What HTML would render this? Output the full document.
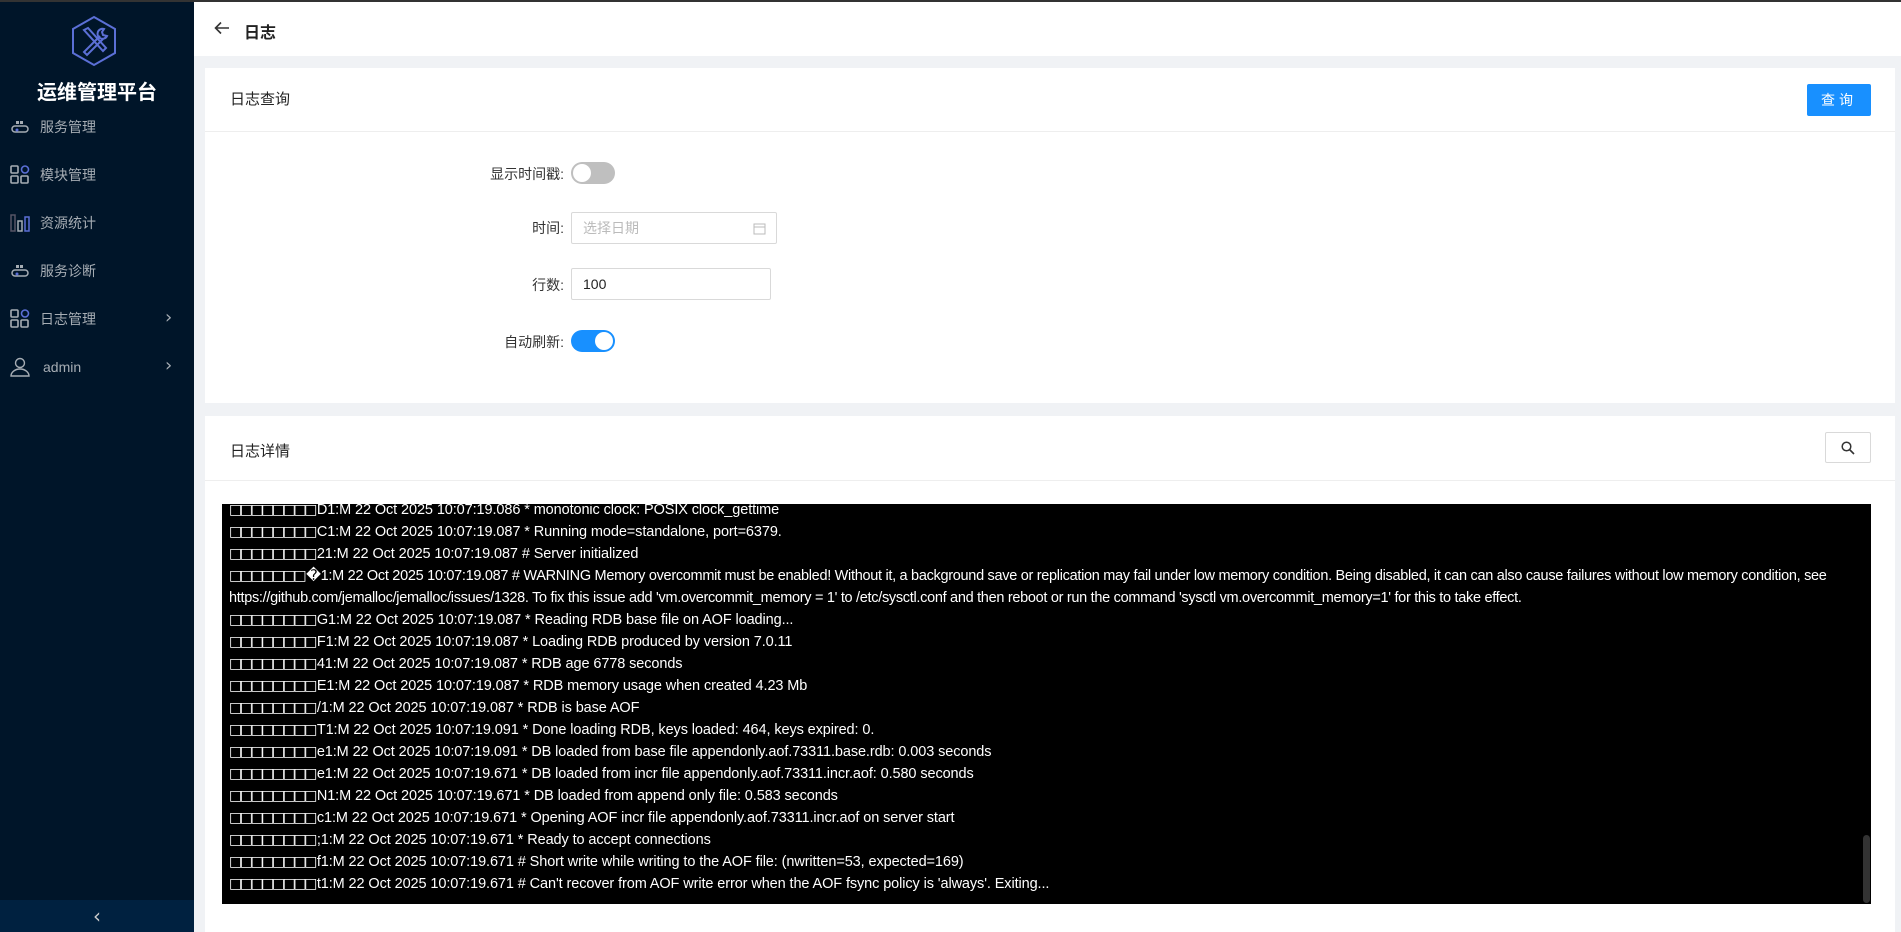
<!DOCTYPE html>
<html><head><meta charset="utf-8"><style>
*{margin:0;padding:0;box-sizing:border-box}
body{width:1901px;height:932px;overflow:hidden;background:#f0f2f5;font-family:"Liberation Sans","Noto Sans CJK SC",sans-serif;position:relative}
.abs{position:absolute}
#topline{left:0;top:0;width:1901px;height:2px;background:#333}
#side{left:0;top:2px;width:194px;height:930px;background:#001529}
.mi{position:absolute;left:0;width:194px;height:24px;color:#a6adb4;font-size:14px;line-height:24px}
.mi .t{position:absolute;left:40px;top:0}
.mi .ic{position:absolute;left:10px;top:2px}
.mi .ch{position:absolute;left:165px;top:-1px;color:#a6adb4;font-size:18px;font-family:"DejaVu Sans",sans-serif}
#hdr{left:194px;top:2px;width:1707px;height:54px;background:#fff}
.card{background:#fff;position:absolute;left:205px;width:1690px}
.ct{position:absolute;left:25px;font-size:15px;color:#222}
.lbl{position:absolute;font-size:14px;color:#333;text-align:right;width:200px;left:364px}
.sw{position:absolute;left:571px;width:44px;height:22px;border-radius:11px}
.sw i{position:absolute;top:2px;width:18px;height:18px;border-radius:50%;background:#fff}
.inp{position:absolute;left:571px;border:1px solid #d9d9d9;border-radius:2px;font-size:13px;padding-left:11px}
#log{left:222px;top:504px;width:1649px;height:400px;background:#000;color:#fff;font-size:14.5px;line-height:22px;padding:0 0 0 7px;overflow:hidden;white-space:nowrap;font-family:"Liberation Sans","DejaVu Sans",sans-serif;letter-spacing:-0.1px}
.b{font-family:"DejaVu Sans",sans-serif;font-size:14px;letter-spacing:-2.5px;margin-right:2px}
.n{letter-spacing:-0.3px}
</style></head><body>
<div id="topline" class="abs"></div>
<div id="side" class="abs">
<svg class="abs" style="left:71px;top:13px" width="46" height="52" viewBox="0 0 46 52"><polygon points="23,2 44,14 44,38 23,50 2,38 2,14" fill="none" stroke="#5b6fd6" stroke-width="2"/><path d="M13 15 l4 -2 l18 20 l-3 3 z M33 14 a5 5 0 1 0 3 7 l-4 -1 l-1 -3 z M29 21 L13 37 l3 3 L32 24" fill="none" stroke="#5b6fd6" stroke-width="2"/></svg>
<div class="abs" style="left:0;width:194px;top:74px;text-align:center;color:#fff;font-size:20px;font-weight:bold">运维管理平台</div>
<div class="mi" style="top:113px"><svg class="ic" width="20" height="20"><rect x="2" y="9" width="16" height="6" rx="3" fill="none" stroke="#a6adb4" stroke-width="1.5"/><rect x="6" y="4" width="3" height="3" fill="#a6adb4"/><rect x="10" y="4" width="3" height="3" fill="#a6adb4"/><circle cx="7" cy="13" r="1.5" fill="#5b6fd6"/></svg><span class="t">服务管理</span></div>
<div class="mi" style="top:161px"><svg class="ic" width="20" height="20"><rect x="1" y="1" width="7" height="7" rx="1" fill="none" stroke="#a6adb4" stroke-width="1.6"/><circle cx="15" cy="4.5" r="3.5" fill="none" stroke="#5b6fd6" stroke-width="1.6"/><rect x="1" y="11" width="7" height="7" rx="1" fill="none" stroke="#a6adb4" stroke-width="1.6"/><rect x="11" y="11" width="7" height="7" rx="1" fill="none" stroke="#a6adb4" stroke-width="1.6"/></svg><span class="t">模块管理</span></div>
<div class="mi" style="top:209px"><svg class="ic" width="20" height="20"><rect x="1" y="2" width="4" height="16" fill="none" stroke="#556" stroke-width="1.5"/><rect x="8" y="8" width="4" height="10" fill="none" stroke="#a6adb4" stroke-width="1.5"/><rect x="15" y="4" width="4" height="14" fill="none" stroke="#5b6fd6" stroke-width="1.5"/></svg><span class="t">资源统计</span></div>
<div class="mi" style="top:257px"><svg class="ic" width="20" height="20"><rect x="2" y="9" width="16" height="6" rx="3" fill="none" stroke="#a6adb4" stroke-width="1.5"/><rect x="6" y="4" width="3" height="3" fill="#a6adb4"/><rect x="10" y="4" width="3" height="3" fill="#a6adb4"/><circle cx="7" cy="13" r="1.5" fill="#5b6fd6"/></svg><span class="t">服务诊断</span></div>
<div class="mi" style="top:305px"><svg class="ic" width="20" height="20"><rect x="1" y="1" width="7" height="7" rx="1" fill="none" stroke="#a6adb4" stroke-width="1.6"/><circle cx="15" cy="4.5" r="3.5" fill="none" stroke="#5b6fd6" stroke-width="1.6"/><rect x="1" y="11" width="7" height="7" rx="1" fill="none" stroke="#a6adb4" stroke-width="1.6"/><rect x="11" y="11" width="7" height="7" rx="1" fill="none" stroke="#a6adb4" stroke-width="1.6"/></svg><span class="t">日志管理</span><span class="ch">›</span></div>
<div class="mi" style="top:353px"><svg class="ic" width="20" height="20"><circle cx="10" cy="6" r="4.5" fill="none" stroke="#a6adb4" stroke-width="1.4"/><path d="M1 19 a9 7 0 0 1 18 0 z" fill="none" stroke="#a6adb4" stroke-width="1.4"/></svg><span class="t" style="left:43px">admin</span><span class="ch">›</span></div>
<div class="abs" style="left:0;top:898px;width:194px;height:32px;background:#002140;color:#ccc;text-align:center;line-height:32px;font-size:20px;font-family:'DejaVu Sans',sans-serif">‹</div>
</div>
<div id="hdr" class="abs">
<svg class="abs" style="left:20px;top:19px" width="16" height="14"><path d="M15 7 H2 M7 1.5 L1.5 7 L7 12.5" fill="none" stroke="#333" stroke-width="1.6"/></svg>
<div class="abs" style="left:50px;top:17px;font-size:16px;font-weight:bold;color:#222">日志</div>
</div>
<div class="card" style="top:68px;height:335px">
<div class="ct" style="top:20px">日志查询</div>
<div class="abs" style="left:0;top:63px;width:1690px;height:1px;background:#eee"></div>
<div class="abs" style="left:1602px;top:16px;width:64px;height:32px;background:#1890ff;color:#fff;font-size:14px;text-align:center;line-height:32px;border-radius:2px;letter-spacing:4px">查询</div>
</div>
<div class="lbl" style="top:164px">显示时间戳:</div>
<div class="sw" style="top:162px;background:#bfbfbf"><i style="left:2px"></i></div>
<div class="lbl" style="top:218px">时间:</div>
<div class="inp" style="top:212px;width:206px;height:32px;line-height:30px;color:#bbb;font-size:14px">选择日期<svg class="abs" style="right:10px;top:9px" width="13" height="13"><rect x="1" y="2" width="11" height="10" fill="none" stroke="#bbb"/><line x1="1" y1="5" x2="12" y2="5" stroke="#bbb"/></svg></div>
<div class="lbl" style="top:275px">行数:</div>
<div class="inp" style="top:268px;width:200px;height:32px;line-height:30px;color:#222;font-size:14px">100</div>
<div class="lbl" style="top:332px">自动刷新:</div>
<div class="sw" style="top:330px;background:#1890ff"><i style="left:24px"></i></div>
<div class="card" style="top:416px;height:516px">
<div class="ct" style="top:24px">日志详情</div>
<div class="abs" style="left:0;top:64px;width:1690px;height:1px;background:#eee"></div>
<div class="abs" style="left:1620px;top:16px;width:46px;height:31px;border:1px solid #d9d9d9;border-radius:2px"><svg class="abs" style="left:15px;top:8px" width="14" height="14"><circle cx="5.5" cy="5.5" r="4.3" fill="none" stroke="#333" stroke-width="1.5"/><line x1="8.5" y1="8.5" x2="13" y2="13" stroke="#333" stroke-width="1.6"/></svg></div>
</div>
<div id="log" class="abs">
<div style="margin-top:-5px"><span class="b">□□□□□□□□</span>D1:M 22 Oct 2025 10:07:19.086 * monotonic clock: POSIX clock_gettime</div>
<div><span class="b">□□□□□□□□</span>C1:M 22 Oct 2025 10:07:19.087 * Running mode=standalone, port=6379.</div>
<div><span class="b">□□□□□□□□</span>21:M 22 Oct 2025 10:07:19.087 # Server initialized</div>
<div class="n"><span class="b">□□□□□□□</span>�1:M 22 Oct 2025 10:07:19.087 # WARNING Memory overcommit must be enabled! Without it, a background save or replication may fail under low memory condition. Being disabled, it can can also cause failures without low memory condition, see</div>
<div class="n">https://github.com/jemalloc/jemalloc/issues/1328. To fix this issue add 'vm.overcommit_memory = 1' to /etc/sysctl.conf and then reboot or run the command 'sysctl vm.overcommit_memory=1' for this to take effect.</div>
<div><span class="b">□□□□□□□□</span>G1:M 22 Oct 2025 10:07:19.087 * Reading RDB base file on AOF loading...</div>
<div><span class="b">□□□□□□□□</span>F1:M 22 Oct 2025 10:07:19.087 * Loading RDB produced by version 7.0.11</div>
<div><span class="b">□□□□□□□□</span>41:M 22 Oct 2025 10:07:19.087 * RDB age 6778 seconds</div>
<div><span class="b">□□□□□□□□</span>E1:M 22 Oct 2025 10:07:19.087 * RDB memory usage when created 4.23 Mb</div>
<div><span class="b">□□□□□□□□</span>/1:M 22 Oct 2025 10:07:19.087 * RDB is base AOF</div>
<div><span class="b">□□□□□□□□</span>T1:M 22 Oct 2025 10:07:19.091 * Done loading RDB, keys loaded: 464, keys expired: 0.</div>
<div><span class="b">□□□□□□□□</span>e1:M 22 Oct 2025 10:07:19.091 * DB loaded from base file appendonly.aof.73311.base.rdb: 0.003 seconds</div>
<div><span class="b">□□□□□□□□</span>e1:M 22 Oct 2025 10:07:19.671 * DB loaded from incr file appendonly.aof.73311.incr.aof: 0.580 seconds</div>
<div><span class="b">□□□□□□□□</span>N1:M 22 Oct 2025 10:07:19.671 * DB loaded from append only file: 0.583 seconds</div>
<div><span class="b">□□□□□□□□</span>c1:M 22 Oct 2025 10:07:19.671 * Opening AOF incr file appendonly.aof.73311.incr.aof on server start</div>
<div><span class="b">□□□□□□□□</span>;1:M 22 Oct 2025 10:07:19.671 * Ready to accept connections</div>
<div><span class="b">□□□□□□□□</span>f1:M 22 Oct 2025 10:07:19.671 # Short write while writing to the AOF file: (nwritten=53, expected=169)</div>
<div><span class="b">□□□□□□□□</span>t1:M 22 Oct 2025 10:07:19.671 # Can't recover from AOF write error when the AOF fsync policy is 'always'. Exiting...</div>
</div>
<div class="abs" style="left:1863px;top:835px;width:7px;height:68px;border-radius:4px;background:#333"></div>
</body></html>
